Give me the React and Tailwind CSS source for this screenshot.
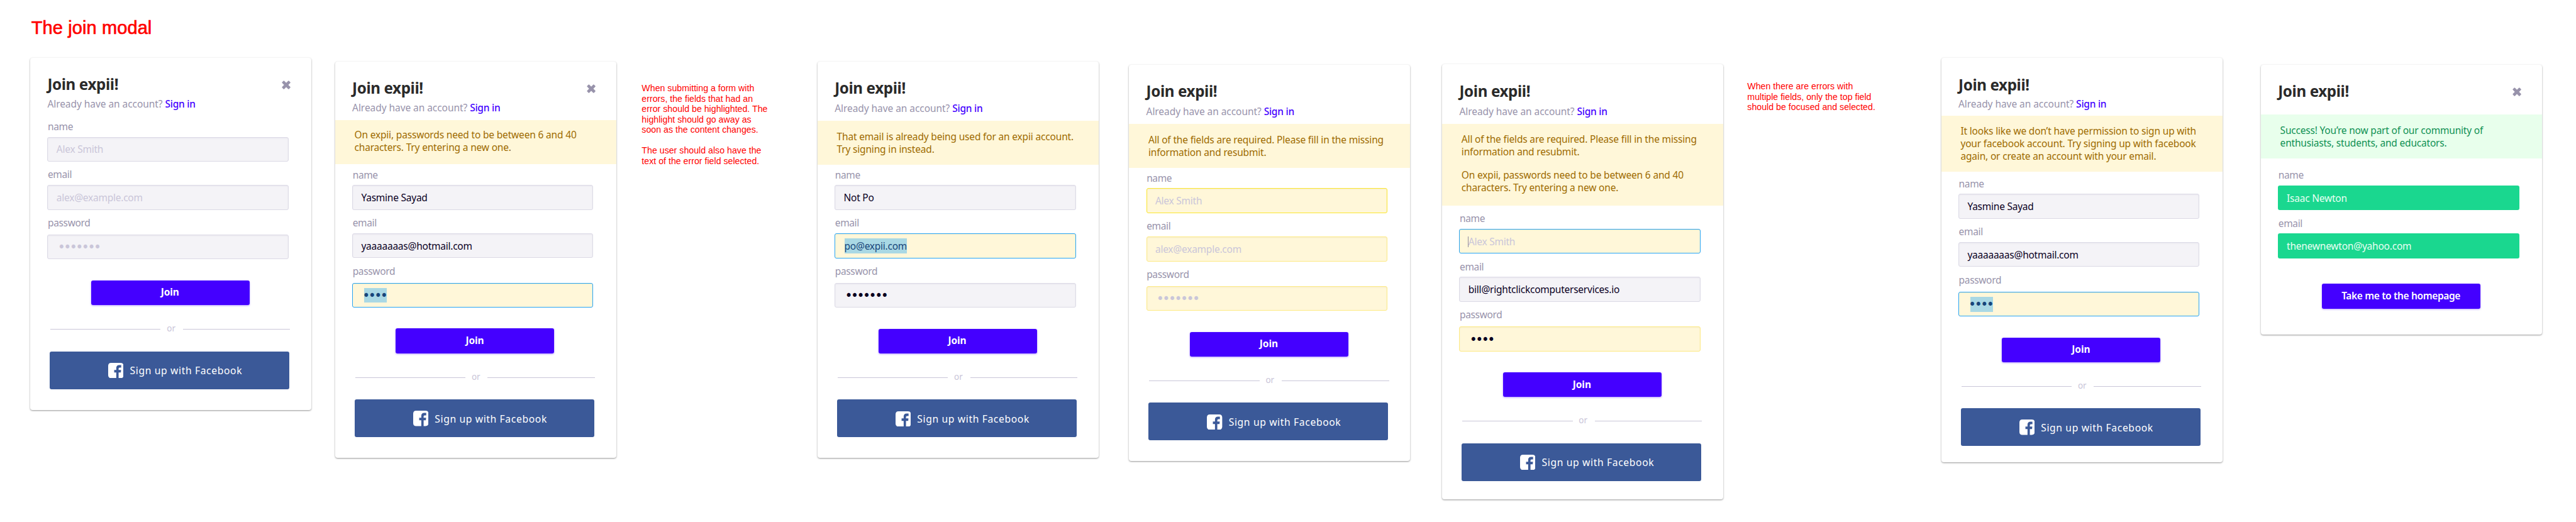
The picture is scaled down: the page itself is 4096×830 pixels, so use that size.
import React from 'react';

const SANS = "font-['Noto_Sans',sans-serif]";

const TONES = {
  plain: 'border-[#dcdae6] bg-[#f4f3f7] shadow-[inset_0_1px_2px_rgba(90,80,130,0.08)]',
  focus: 'border-[#27a4f2] bg-[#fff7d9] shadow-[inset_0_1px_1px_rgba(120,100,0,0.06)]',
  strong: 'border-[#fbe62e] bg-[#fff7d9] shadow-[inset_0_1px_2px_rgba(120,100,0,0.08)]',
  warn: 'border-[#fdea85] bg-[#fff7d9] shadow-[inset_0_1px_2px_rgba(120,100,0,0.08)]',
};

function CloseIcon() {
  return (
    <svg viewBox="0 0 24 24" className="h-[14.2px] w-[14.2px]" fill="#9893ab">
      <rect x="-1" y="8" width="26" height="8" rx="1.8" transform="rotate(45 12 12)" />
      <rect x="-1" y="8" width="26" height="8" rx="1.8" transform="rotate(-45 12 12)" />
    </svg>
  );
}

function FacebookIcon() {
  return (
    <svg viewBox="0 0 125 125" className="h-[24.4px] w-[24.4px]">
      <path
        fill="#fff"
        d="M24 0H101Q125 0 125 24V101Q125 125 101 125H85V78H103L105 58H85V46Q85 38 93 38H106V18H90Q66 18 66 43V58H49V78H66V125H24Q0 125 0 101V24Q0 0 24 0Z"
      />
    </svg>
  );
}

function Dots({ count, className }) {
  return (
    <span className={`ml-[-3.1px] pt-px font-['DejaVu_Sans',sans-serif] text-[20.5px] leading-[20px] tracking-[-2.55px] ${className}`}>
      {'•'.repeat(count)}
    </span>
  );
}

function Value({ field }) {
  if (field.dots && field.selected) {
    return (
      <span className="ml-[4.8px] flex h-[23.6px] w-[35.4px] items-center bg-[#a9d8e4]">
        <Dots count={field.dots} className="text-[#174579]" />
      </span>
    );
  }
  if (field.dots) {
    return (
      <span className="ml-[5px] flex items-center">
        <Dots count={field.dots} className={field.hint ? 'text-[#cac6d9]' : 'text-[#0a001f]'} />
      </span>
    );
  }
  if (field.selected) {
    return <span className="ml-[1px] flex h-[23.6px] w-[99px] items-center bg-[#a9d8e4] text-[#174579]">{field.text}</span>;
  }
  return (
    <span className={`relative ${field.hint ? 'text-[#cac6d9]' : 'text-[#0a001f]'}`}>
      {field.caret && <i className="absolute left-[-1px] top-[2px] h-[17px] w-px bg-[#8f8b9c]" />}
      {field.text}
    </span>
  );
}

function Field({ label, gap, className = 'mt-[10.5px]', field }) {
  return (
    <div className={`flex flex-col ${gap} ${className}`}>
      <label className="pl-[0.6px] text-[15.5px] leading-[20px] tracking-[-0.35px] text-[#9893ab]">{label}</label>
      <div className={`flex h-[39.4px] w-[383.4px] items-center rounded-[3px] border pl-[13.4px] pt-[0.4px] text-[15.5px] leading-[20px] tracking-[-0.24px] ${TONES[field.tone || 'plain']}`}>
        <Value field={field} />
      </div>
    </div>
  );
}

function Card({ className, close, titleTop = 'pt-[26.8px]', children }) {
  return (
    <section className={`relative w-[447.1px] shrink-0 rounded-[4px] bg-white shadow-[0_1px_2.5px_rgba(0,0,0,0.42)] ${SANS} ${className}`}>
      <header className={`flex items-start justify-between pl-[27.2px] pr-[32.8px] ${titleTop}`}>
        <h2 className="text-[24.2px] font-bold leading-[32px] tracking-[-0.38px] text-[#2a2a2a]">Join expii!</h2>
        {close && <div className="mt-[9.5px]"><CloseIcon /></div>}
      </header>
      {children}
    </section>
  );
}

function SignIn({ className = 'mt-[4.6px]' }) {
  return (
    <p className={`pl-[27.2px] text-[15.5px] leading-[20px] tracking-[-0.06px] text-[#9893ab] ${className}`}>
      Already have an account? <a className="font-medium tracking-[-0.25px] text-[#4400ff]">Sign in</a>
    </p>
  );
}

function Notice({ className, paragraphs }) {
  return (
    <div className={`mt-[9.7px] flex flex-col gap-[16.5px] bg-[#fff7d9] pl-[30.6px] text-[15.5px] leading-[20px] tracking-[-0.175px] text-[#9e6b00] ${className}`}>
      {paragraphs.map((lines) => (
        <p key={lines[0]}>
          {lines.map((line) => (
            <span key={line} className="block whitespace-nowrap">{line}</span>
          ))}
        </p>
      ))}
    </div>
  );
}

function Form({ className, name, email, password }) {
  return (
    <div className="flex flex-col pl-[27.2px]">
      <Field label="name" gap="gap-[6.4px]" className={className} field={name} />
      <Field label="email" gap="gap-[6.8px]" field={email} />
      <Field label="password" gap="gap-[8.9px]" field={password} />
      <button className="ml-[69.4px] mt-[33.3px] h-[39.5px] w-[252px] rounded-[3px] bg-[#4400ff] pb-[1px] pr-[1px] text-[15.5px] font-bold tracking-[-0.1px] text-white shadow-[0_1px_3px_rgba(68,0,255,0.4)]">
        Join
      </button>
      <div className="ml-[4.8px] mt-[26.8px] flex h-[20px] w-[381.2px] items-start">
        <span className="mt-[11px] h-px w-[175.3px] bg-[#c9c6d8]" />
        <span className="w-[35.3px] pr-[2px] text-center text-[13.5px] leading-[20px] text-[#cac6d9]">or</span>
        <span className="mt-[11px] h-px grow bg-[#c9c6d8]" />
      </div>
      <button className="ml-[3.6px] mt-[26.6px] flex h-[60px] w-[381px] items-start rounded-[3px] bg-[#3b5998] pl-[93px] pt-[18.1px]">
        <FacebookIcon />
        <span className="ml-[10.2px] mt-[2.4px] whitespace-nowrap text-[15.7px] leading-[20px] tracking-[0.62px] text-white">Sign up with Facebook</span>
      </button>
    </div>
  );
}

function Done({ label, text, gap, className }) {
  return (
    <div className={`flex flex-col ${gap} ${className}`}>
      <label className="pl-[0.6px] text-[15.5px] leading-[20px] tracking-[-0.35px] text-[#9893ab]">{label}</label>
      <div className="flex h-[39.6px] w-[383.4px] items-center rounded-[3px] bg-[#1ad78f] pl-[13.8px] text-[15.5px] leading-[20px] tracking-[-0.22px] text-[#e8fff2]">{text}</div>
    </div>
  );
}

function Note({ className, paragraphs }) {
  return (
    <aside className={`flex w-[240px] shrink-0 flex-col gap-[16.5px] font-['Liberation_Sans',sans-serif] text-[14.2px] leading-[16.5px] text-[#ff0000] ${className}`}>
      {paragraphs.map((lines) => (
        <p key={lines[0]}>
          {lines.map((line) => (
            <span key={line} className="block whitespace-nowrap">{line}</span>
          ))}
        </p>
      ))}
    </aside>
  );
}

const REQUIRED = ['All of the fields are required. Please fill in the missing', 'information and resubmit.'];
const LENGTH = ['On expii, passwords need to be between 6 and 40', 'characters. Try entering a new one.'];

export default function App() {
  return (
    <main className="h-[830px] w-[4096px] overflow-hidden bg-white">
      <h1 className="h-[80px] pl-[49.8px] pt-[26px] font-['Liberation_Sans',sans-serif] text-[29px] leading-[36px] tracking-[0.1px] text-[#ff0000] [-webkit-text-stroke:0.7px_#ff0000]">
        The join modal
      </h1>
      <div className="flex items-start">
        <Card close className="ml-[48.2px] mt-[11.5px] h-[560px]">
          <SignIn />
          <Form
            className="mt-[16.3px]"
            name={{ text: 'Alex Smith', hint: true }}
            email={{ text: 'alex@example.com', hint: true }}
            password={{ dots: 7, hint: true }}
          />
        </Card>
        <Card close className="ml-[37.6px] mt-[17.7px] h-[630.7px]">
          <SignIn />
          <Notice className="h-[70.2px] pt-[13px]" paragraphs={[LENGTH]} />
          <Form
            className="mt-[6.9px]"
            name={{ text: 'Yasmine Sayad' }}
            email={{ text: 'yaaaaaaas@hotmail.com' }}
            password={{ dots: 4, tone: 'focus', selected: true }}
          />
        </Card>
        <Note
          className="ml-[40.4px] mt-[52.3px]"
          paragraphs={[
            ['When submitting a form with', 'errors, the fields that had an', 'error should be highlighted. The', 'highlight should go away as', 'soon as the content changes.'],
            ['The user should also have the', 'text of the error field selected.'],
          ]}
        />
        <Card className="ml-[39.6px] mt-[17.7px] h-[630.7px]">
          <SignIn className="mt-[5.9px]" />
          <Notice className="h-[70.4px] pt-[14.6px]" paragraphs={[['That email is already being used for an expii account.', 'Try signing in instead.']]} />
          <Form
            className="mt-[5.6px]"
            name={{ text: 'Not Po' }}
            email={{ text: 'po@expii.com', tone: 'focus', selected: true }}
            password={{ dots: 7 }}
          />
        </Card>
        <Card className="ml-[48.3px] mt-[22.7px] h-[630.5px]">
          <SignIn className="mt-[5.9px]" />
          <Notice className="h-[70.4px] pt-[14.6px]" paragraphs={[REQUIRED]} />
          <Form
            className="mt-[5.6px]"
            name={{ text: 'Alex Smith', hint: true, tone: 'strong' }}
            email={{ text: 'alex@example.com', hint: true, tone: 'warn' }}
            password={{ dots: 7, hint: true, tone: 'warn' }}
          />
        </Card>
        <Card className="ml-[50.8px] mt-[22.4px] h-[691.9px]">
          <SignIn className="mt-[5.9px]" />
          <Notice className="h-[130px] pt-[14.6px]" paragraphs={[REQUIRED, LENGTH]} />
          <Form
            className="mt-[10.6px]"
            name={{ text: 'Alex Smith', hint: true, tone: 'focus', caret: true }}
            email={{ text: 'bill@rightclickcomputerservices.io' }}
            password={{ dots: 4, tone: 'warn' }}
          />
        </Card>
        <Note
          className="ml-[38px] mt-[49.2px]"
          paragraphs={[['When there are errors with', 'multiple fields, only the top field', 'should be focused and selected.']]}
        />
        <Card className="ml-[68.5px] mt-[11.8px] h-[643.6px]">
          <SignIn className="mt-[4.2px]" />
          <Notice
            className="h-[88.1px] pt-[13.3px]"
            paragraphs={[['It looks like we don’t have permission to sign up with', 'your facebook account. Try signing up with facebook', 'again, or create an account with your email.']]}
          />
          <Form
            className="mt-[9.4px]"
            name={{ text: 'Yasmine Sayad' }}
            email={{ text: 'yaaaaaaas@hotmail.com' }}
            password={{ dots: 4, tone: 'focus', selected: true }}
          />
        </Card>
        <Card close titleTop="pt-[26.5px]" className="ml-[61.1px] mt-[22.5px] h-[429.2px]">
          <div className="mt-[20.7px] h-[70.5px] bg-[#e8ffec] pl-[30.6px] pt-[15.8px] text-[15.5px] leading-[20px] tracking-[-0.2px] text-[#0f9154]">
            <span className="block whitespace-nowrap">Success! You’re now part of our community of</span>
            <span className="block whitespace-nowrap">enthusiasts, students, and educators.</span>
          </div>
          <div className="flex flex-col pl-[27.2px]">
            <Done label="name" text="Isaac Newton" gap="gap-[6.8px]" className="mt-[15.9px]" />
            <Done label="email" text="thenewnewton@yahoo.com" gap="gap-[6.5px]" className="mt-[10.1px]" />
            <button className="ml-[69.4px] mt-[40.6px] h-[39.6px] w-[252px] rounded-[3px] bg-[#4400ff] pb-[1px] text-[15.5px] font-semibold tracking-[-0.35px] text-white shadow-[0_1px_3px_rgba(68,0,255,0.35)]">
              Take me to the homepage
            </button>
          </div>
        </Card>
      </div>
    </main>
  );
}
